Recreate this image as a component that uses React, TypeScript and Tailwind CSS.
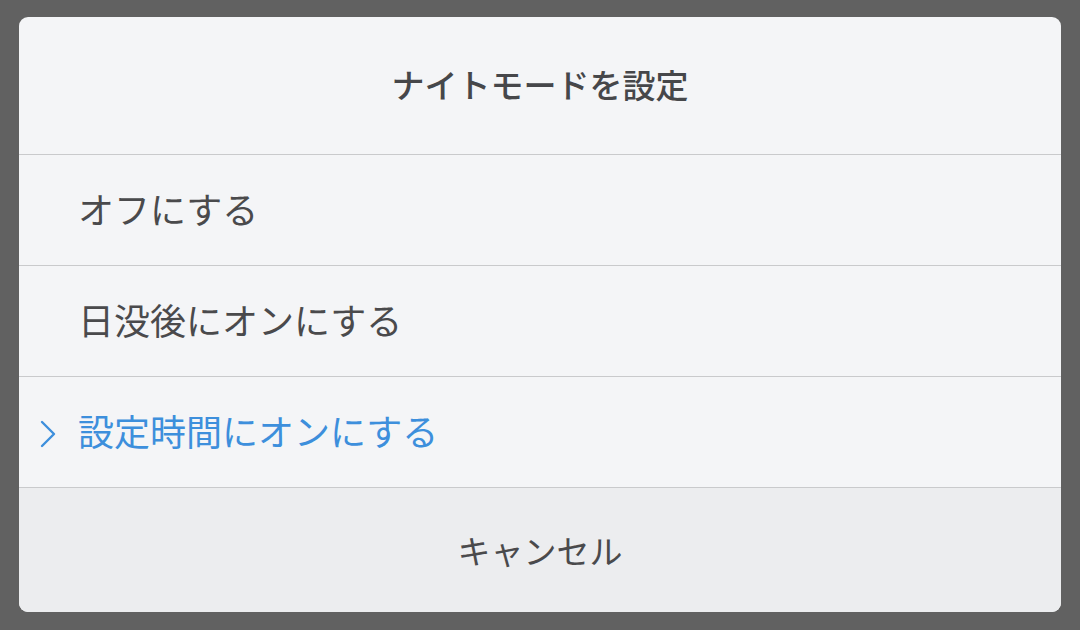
import React from "react";

const font = { fontFamily: '"Noto Sans CJK JP", "Noto Sans", sans-serif' };

function Row({ label, active }: { label: string; active?: boolean }) {
  return (
    <div className="relative flex h-[111px] items-center border-b border-[#c9cacc] pb-[4px] pl-[59px]">
      {active && (
        <svg
          className="absolute left-[21px] top-[43px]"
          width="16"
          height="28"
          viewBox="0 0 16 28"
          fill="none"
        >
          <path d="M2 2 L14 14 L2 26" stroke="#3d8fdc" strokeWidth="2.4" strokeLinecap="round" strokeLinejoin="round" />
        </svg>
      )}
      <span className={`text-[36px] leading-none ${active ? "text-[#3d8fdc]" : "text-[#4a4a4c]"}`}>{label}</span>
    </div>
  );
}

export default function App() {
  return (
    <div className="flex h-[630px] w-[1080px] bg-[#616161] px-[19px] pt-[17px]" style={font}>
      <div className="flex h-[595px] w-full flex-col overflow-hidden rounded-[9px] bg-[#f4f5f7]">
        <div className="flex h-[138px] items-center justify-center border-b border-[#c9cacc] pb-[3px]">
          <span className="text-[33px] font-medium leading-none text-[#46474a]">ナイトモードを設定</span>
        </div>
        <Row label="オフにする" />
        <Row label="日没後にオンにする" />
        <Row label="設定時間にオンにする" active />
        <div className="flex flex-1 items-center justify-center bg-[#ecedef]">
          <span className="text-[33px] leading-none text-[#4a4a4c]">キャンセル</span>
        </div>
      </div>
    </div>
  );
}
